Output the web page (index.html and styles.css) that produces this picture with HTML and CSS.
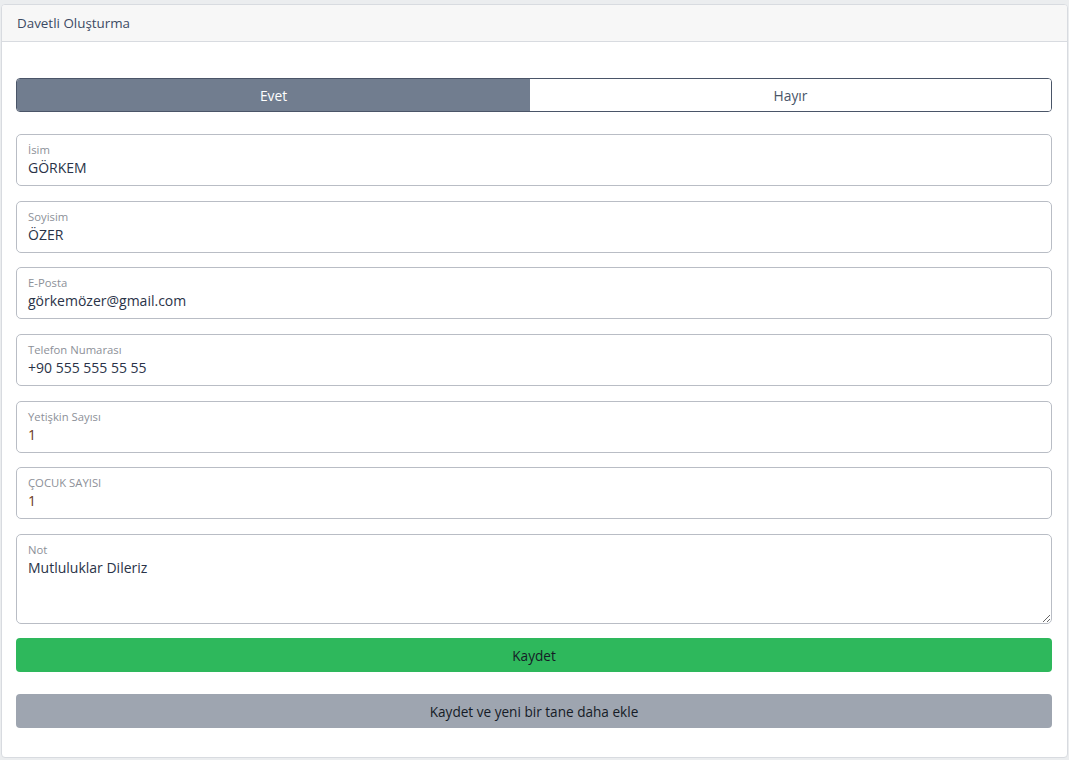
FILE: index.html
```html
<!DOCTYPE html>
<html lang="tr">
<head>
<meta charset="utf-8">
<title>Davetli Oluşturma</title>
<link rel="stylesheet" href="styles.css">
</head>
<body>
<div class="card">
  <div class="card-header">Davetli Oluşturma</div>
  <div class="card-body">
    <div class="toggle">
      <div class="toggle-opt active">Evet</div>
      <div class="toggle-opt">Hayır</div>
    </div>
    <div class="fields">
      <div class="field"><span class="label">İsim</span><span class="value">GÖRKEM</span></div>
      <div class="field"><span class="label">Soyisim</span><span class="value">ÖZER</span></div>
      <div class="field"><span class="label">E-Posta</span><span class="value">görkemözer@gmail.com</span></div>
      <div class="field"><span class="label">Telefon Numarası</span><span class="value">+90 555 555 55 55</span></div>
      <div class="field"><span class="label">Yetişkin Sayısı</span><span class="value num">1</span></div>
      <div class="field"><span class="label">ÇOCUK SAYISI</span><span class="value num">1</span></div>
      <div class="field note"><span class="label">Not</span><span class="value">Mutluluklar Dileriz</span></div>
    </div>
    <div class="btn btn-green">Kaydet</div>
    <div class="btn btn-gray">Kaydet ve yeni bir tane daha ekle</div>
  </div>
</div>
</body>
</html>
```
FILE: styles.css
```css
html, body {
  margin: 0;
  background: #ebedef;
}
body {
  padding: 4px 1px 2px 1px;
  font-family: "Open Sans", "Noto Sans", sans-serif;
  color: #3c4b64;
}
.card {
  background: #fff;
  border: 1px solid #d8dbe0;
  border-radius: 4px;
  overflow: hidden;
}
.card-header {
  background: #f7f7f7;
  border-bottom: 1px solid #d8dbe0;
  height: 36px;
  line-height: 36px;
  padding-left: 15px;
  font-size: 13.4px;
  color: #3c4b64;
}
.card-body {
  padding: 36px 15px 29px 14px;
}
.toggle {
  display: grid;
  grid-template-columns: 514fr 522fr;
  height: 34px;
  border: 1px solid #4a5568;
  border-radius: 4px;
  overflow: hidden;
  box-sizing: border-box;
}
.toggle-opt {
  display: flex;
  align-items: center;
  justify-content: center;
  font-size: 13.8px;
  color: #4a5568;
  background: #fff;
}
.toggle-opt.active {
  background: #717d8f;
  color: #fff;
}
.fields {
  display: flex;
  flex-direction: column;
  gap: 14.7px;
  margin-top: 22px;
}
.field {
  height: 52px;
  box-sizing: border-box;
  border: 1px solid #b9bdc5;
  border-radius: 5px;
  padding: 7px 11px 0 11px;
  display: flex;
  flex-direction: column;
}
.field.note {
  height: 90px;
  resize: vertical;
  overflow: auto;
}
.label {
  font-size: 11.3px;
  line-height: 16px;
  color: #8c9098;
}
.value {
  font-size: 14px;
  line-height: 20px;
  color: #2a3348;
}
.value.num {
  color: #6b3a20;
}
.btn {
  height: 34px;
  border-radius: 4px;
  display: flex;
  align-items: center;
  justify-content: center;
  font-size: 13.6px;
  color: #151b26;
}
.btn-green {
  background: #2eb85c;
  margin-top: 14px;
}
.btn-gray {
  background: #9ea5b0;
  margin-top: 22px;
}
```
